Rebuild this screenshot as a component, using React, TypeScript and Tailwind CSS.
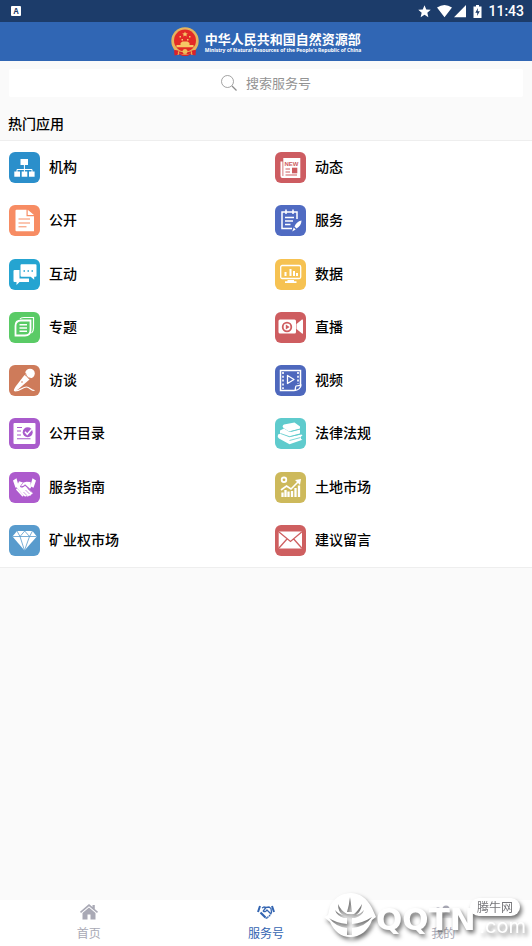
import type { ReactNode } from "react";
import { MdStar } from "react-icons/md";

type Service = { name: string; tile: string; art: ReactNode };

const services: Service[] = [
  {
    name: "机构",
    tile: "bg-[#2b8fcb]",
    art: (
      <>
        <path fill="#fff" d="M11.5 7h7.5v6h-7.5zM5.3 19.5H11v5.2H5.3zM12.7 19.5h5.6v5.2h-5.6zM20 19.5h5.6v5.2H20z" />
        <path stroke="#fff" d="M15.4 13v7M8 20v-2.5h15V20" />
      </>
    ),
  },
  {
    name: "动态",
    tile: "bg-[#cd5c61]",
    art: (
      <>
        <path fill="#fff" d="M8.3 6h17v20H7.5a2 2 0 0 1-2-2V9.5h2V24h.8z" />
        <text x="9.5" y="14" fontSize="6" fontWeight="700" fill="#cd5c61" fontFamily="Liberation Sans, sans-serif">NEW</text>
        <path stroke="#cd5c61" d="M10.5 17h4.5M10.5 20h4.5M10.5 23h11.5" />
        <path fill="#cd5c61" d="M17 15.7h5.3v5.6H17z" />
      </>
    ),
  },
  {
    name: "公开",
    tile: "bg-[#f78c63]",
    art: (
      <>
        <path fill="#fff" d="M7.5 4.7h10v6.5H25v15H7.5a1 1 0 0 1-1-1V5.7a1 1 0 0 1 1-1zM18.7 4.7l6.3 5.3h-6.3z" />
        <path stroke="#f78c63" d="M9.5 14h11.5M9.5 18h11.5M9.5 21.8h8" />
      </>
    ),
  },
  {
    name: "服务",
    tile: "bg-[#506bc2]",
    art: (
      <>
        <path stroke="#fff" strokeWidth="1.5" d="M22 14V7H7v16.5h10M11 4.5V9M18 4.5V9M10 12.5h9M10 16h8M10 19.5h5.5" />
        <path fill="#fff" d="M26.5 15.5c-3.5.8-6 3-7 6l2 2c3-1.5 5-4.500 5-8zM18.700 22.500l2 2-3.500 2z" />
      </>
    ),
  },
  {
    name: "互动",
    tile: "bg-[#25a4d1]",
    art: (
      <>
        <path fill="#fff" d="M5.5 11h5v8.5H20v3.5h-9.5L7.5 26v-3h-2a1 1 0 0 1-1-1V12a1 1 0 0 1 1-1z" />
        <path fill="#fff" d="M12.5 5.3h14a1 1 0 0 1 1 1v10.5a1 1 0 0 1-1 1h-1.3v3l-3.5-3h-9.2a1 1 0 0 1-1-1V6.3a1 1 0 0 1 1-1z" />
        <path fill="#25a4d1" d="M14.5 11.2H16v1.5h-1.5zM18.5 11.2H20v1.5h-1.500zM22.500 11.200H24v1.500h-1.500z" />
      </>
    ),
  },
  {
    name: "数据",
    tile: "bg-[#f6c252]",
    art: (
      <>
        <rect x="5.7" y="6.5" width="20" height="13" rx="1.5" stroke="#fff" strokeWidth="1.3" />
        <path stroke="#fff" strokeWidth="2" d="M10.5 17v-4M15.5 17v-7M19 17v-5M22 17v-3" />
        <path fill="#fff" d="M12.5 21h6.5v1.2h2.5V24H10v-1.8h2.5z" />
      </>
    ),
  },
  {
    name: "专题",
    tile: "bg-[#5acb66]",
    art: (
      <>
        <path stroke="#fff" strokeWidth="1.8" d="M12 8.500h9.500V18c0 3.500-2 5.500-5.500 5.500H6.500V14c0-3.500 2-5.500 5.500-5.500z" />
        <path stroke="#fff" strokeWidth="1.2" d="M11 7c1-1.500 2-1.500 4-1.500h9.500V16c0 3-.5 4-2 5" />
        <path stroke="#fff" strokeWidth="1.500" d="M10.500 12.700h7.500M10.500 16h7.500M10.500 19.300h7.500" />
      </>
    ),
  },
  {
    name: "直播",
    tile: "bg-[#ce5d60]",
    art: (
      <>
        <rect x="3.5" y="7.5" width="17.5" height="14" rx="1.5" fill="#fff" />
        <path fill="#fff" d="m21.500 12 5.500-4.500q1-.5 1 1v12.500q0 1-1 .5L21.500 17z" />
        <circle cx="12" cy="15" r="4.3" stroke="#ce5d60" strokeWidth="1.8" />
        <path fill="#ce5d60" d="m10.800 12.600 3.800 2.400-3.800 2.400z" />
      </>
    ),
  },
  {
    name: "访谈",
    tile: "bg-[#ce7b5a]",
    art: (
      <>
        <circle cx="21" cy="8.5" r="4.8" fill="#fff" />
        <path fill="#fff" d="m15.500 10 5 4.500-11 9.500c-2.500 2-4 2.500-4.500 2s.2-2.500 2-5z" />
        <path stroke="#ce7b5a" strokeWidth=".9" d="M16.500 8c.5 3 2 5 5.500 5.500" />
        <path stroke="#fff" strokeWidth="1.2" d="M6 26c6 0 7-4 11.500-4 3.500 0 4 3.500 8 3.500" />
        <circle cx="13" cy="17" r=".8" fill="#ce7b5a" />
      </>
    ),
  },
  {
    name: "视频",
    tile: "bg-[#4e68bd]",
    art: (
      <>
        <path stroke="#fff" strokeWidth="1.5" d="M19 25.500H5.500v-20h20V20" />
        <path stroke="#fff" strokeWidth="1.6" strokeDasharray="2 1.8" d="M8 7v17M23 7v12" />
        <path stroke="#fff" strokeWidth="1.3" strokeLinejoin="round" d="m12.500 10.500 6.500 4-6.500 4zM19.500 25.500c1.500-1 .5-3 1.500-4.500 2-.8 4 0 5-1 0 3-3 5.500-6.500 5.500z" />
      </>
    ),
  },
  {
    name: "公开目录",
    tile: "bg-[#a95bcc]",
    art: (
      <>
        <rect x="4.5" y="5" width="22" height="21" rx="1" fill="#fff" />
        <path stroke="#a95bcc" strokeWidth="1.100" d="M8 9.500h5M8 13h4M8 17h4M8 20.700h13.500" />
        <circle cx="18.7" cy="14.2" r="5" fill="#a95bcc" />
        <path stroke="#fff" strokeWidth="1.5" d="m16 13.800 2.200 2.500 4.500-5" />
      </>
    ),
  },
  {
    name: "法律法规",
    tile: "bg-[#5fcbcd]",
    art: (
      <>
        <path fill="#fff" d="M9 6.500 19.500 4.500 25 8.500v2.300L14 13.500 8.500 10q-2-2 .5-3.500z" />
        <path fill="#fff" d="M5 12.500 9 10.500l5.500 3.500 10.500-2.500v4L14.500 18.500 5 15.500z" />
        <path fill="#fff" d="m3 16.500 3-1 8.500 3.500L26.500 16.500l1 1-1.500 1v2.500l1.500.7-13 4.500L4 20.500Q2 19 3 16.500z" />
        <path stroke="#5fcbcd" strokeWidth=".8" d="M16 13.500 25 11M5.500 15.500l9 3.200 10-2.500M14.500 22.500l11-3" />
      </>
    ),
  },
  {
    name: "服务指南",
    tile: "bg-[#ad5bcd]",
    art: (
      <>
        <path fill="#fff" d="m4 8.500 3.500-2.300 2.200 8-3.200 1.600zM27 8.500l-3.500-2.300-2.200 8 3.200 1.600z" />
        <path fill="#fff" d="m10 9.300 4 1.200-3 3.700c.5 2 3.500 1.500 5-.5l7.500 7c.5 1.500-1 2-1.500 1.500 0 1.700-1.500 1.800-2 1.200-.5 1.300-2 1.300-2.500.6-1 1-2 .5-3-.5l-7-8z" />
        <path fill="#fff" d="m14.500 10.500 3-.8 4 .3.500 5.500-1 1.200-5-4.500c-1.500 1.800-3 2.300-4 1.800z" />
        <path stroke="#fff" strokeWidth="1.8" strokeLinecap="round" d="m8 17.500 5.500 6" />
        <path stroke="#ad5bcd" strokeWidth=".6" d="m16.500 18 4 4M14.500 20l3.500 3.700M18.500 16.500l4 3.800" />
      </>
    ),
  },
  {
    name: "土地市场",
    tile: "bg-[#cdb95b]",
    art: (
      <>
        <circle cx="9" cy="7.8" r="2.3" stroke="#fff" strokeWidth="1.8" />
        <path stroke="#fff" strokeWidth="1.6" d="m6 18 5.500-4 4.500 3 8-8" />
        <path fill="#fff" d="m20 8 6-1-1 6z" />
        <path stroke="#fff" strokeWidth="2.3" d="M7.500 25v-4.500M10.500 25v-7M13.500 25v-5.500M17 25v-6M20.500 25v-9M24 25V13.500" />
      </>
    ),
  },
  {
    name: "矿业权市场",
    tile: "bg-[#589bcd]",
    art: (
      <>
        <path fill="#fff" d="M8 6h15.500l4.300 5.500-12.300 14-12-14z" />
        <path stroke="#589bcd" strokeWidth=".8" d="M3.500 11.500h24M8 6l3 5.500L15.700 6l4.800 5.500 3-5.500M11 11.500l4.500 14 5-14" />
      </>
    ),
  },
  {
    name: "建议留言",
    tile: "bg-[#ce5f60]",
    art: (
      <>
        <rect x="3.7" y="6.5" width="23.3" height="17" rx="1" fill="#fff" />
        <path stroke="#ce5f60" strokeWidth="1.3" d="m4 7 11.500 9.500L26.700 7M4 23l8-9M26.700 23l-8-9" />
      </>
    ),
  },
];

function Emblem() {
  return (
    <svg viewBox="0 0 28 30" className="h-[30px] w-7" aria-hidden="true">
      <path fill="#d9222a" d="M3 22h22l-.5 6.500-5-1-3 1.500h-5l-3-1.500-5 1z" />
      <circle cx="14" cy="14" r="13.7" fill="#e5b45d" />
      <circle cx="14" cy="13.5" r="11" fill="#e32a26" />
      <path fill="#f6c765" d="m14 4.500.8 1.800 2 .1-1.500 1.300.5 1.900-1.800-1-1.700 1 .4-1.900-1.500-1.300 2-.1zM8.500 9h1.500v1.500H8.500zM18 9h1.500v1.500H18zM10.500 12H12v1.500h-1.500zM16 12h1.500v1.500H16zM9.500 16l2-1.500h5l2 1.500v2h4v2.200h-17V18h4z" />
      <path stroke="#d9222a" strokeWidth="2" fill="none" d="M4 24c3 0 4 2 7 2h6c3 0 4-2 7-2" />
      <circle cx="14" cy="24.5" r="2.5" fill="#f0bc58" />
      <path stroke="#f0bc58" d="m8 24-1 4M20 24l1 4" />
    </svg>
  );
}

function StatusBar() {
  return (
    <div className="flex h-[22px] items-center justify-between bg-[#1c3c6a] pr-2 pl-[11px] text-white">
      <span className="flex h-[10px] w-[10px] items-center justify-center rounded-[1px] bg-white text-[8px] font-bold text-[#1c3c6a]">A</span>
      <div className="flex items-center">
        <MdStar className="size-[15px]" />
        <svg viewBox="0 0 32 14" className="ml-1 h-[14px] w-8" fill="currentColor" aria-hidden="true">
          <path d="M1 3.500Q8.500-1.500 16 3.500L8.500 13.300zM30 1v12.300H18z" />
        </svg>
        <svg viewBox="0 0 9 13" className="ml-[5px] h-[13px] w-[9px]" aria-hidden="true">
          <path fill="#fff" d="M3 0h3v1.500h2.500V13H.5V1.500H3z" />
          <path fill="#1c3c6a" d="M5 3 2.300 7.700h2L4 11l2.800-4.800H4.700z" />
        </svg>
        <span className="ml-[6px] font-[Roboto,sans-serif] text-[14px] leading-[22px] font-medium">11:43</span>
      </div>
    </div>
  );
}

function HomeIcon() {
  return (
    <svg viewBox="0 0 18 16" className="h-4 w-[18px]" aria-hidden="true">
      <path fill="currentColor" d="M9 3.500 15.500 9v6.500h-5v-5h-3v5h-5V9zM9 0l3.500 3V1h2.300v4L18 7.700l-1 1.200-8-6.700-8 6.700-1-1.200z" />
    </svg>
  );
}

function HandshakeIcon() {
  return (
    <svg viewBox="0 0 18 16" className="h-4 w-[18px]" aria-hidden="true" fill="none" stroke="currentColor">
      <path strokeWidth="2" d="M3 2 1 8M15 2l2 6" />
      <path strokeWidth="1.3" d="m5 4 2-1 2 .5 3-.5 2 1.500.5 4-1 2M8.500 4 6.300 7c1 1.200 2.700.8 3.700-1l3.500 3.500" />
      <path strokeWidth="2.2" d="m3.500 8.500 5 5" />
      <path strokeWidth="1.3" d="M8.500 14h2M10.500 12.500l1 1M12 11l1.200 1.200" />
    </svg>
  );
}

function PeopleIcon() {
  return (
    <svg viewBox="0 0 18 16" className="h-4 w-[18px]" aria-hidden="true" fill="currentColor">
      <circle cx="4" cy="5" r="2" opacity=".6" />
      <circle cx="12" cy="5" r="3.5" />
      <path d="M6 14q0-5 6-5t6 5z" opacity=".2" />
    </svg>
  );
}

function Watermark() {
  return (
    <div className="pointer-events-none absolute right-[6px] bottom-1 h-[50px] w-[202px] text-white drop-shadow-[2px_3px_2px_rgba(0,0,0,0.55)]">
      <svg viewBox="0 0 54 48" className="absolute top-0 left-0 h-12 w-[54px]" aria-hidden="true">
        <path
          fill="#fff"
          fillRule="evenodd"
          d="M6 14C12 4 19 1 27 1s16 5 21 15l4 9-4 3c-4 11-12 17-22 17-9 0-16-6-20-15l-6-5 4-2zM26 5q-1 9-3 15h5q-1-8-2-15zM14 12q0 8 5 11-5-1-8-5 2 6 9 8h3v6q-11-1-18-6 7 9 18 10v7h5v-7q13-1 20-11-9 6-20 7v-6h3q7-2 9-8-3 4-8 5 5-3 6-11-4 7-8 10h-7q-6-3-9-10z"
        />
      </svg>
      <span className="absolute top-[9px] left-[52px] font-['DejaVu_Sans',sans-serif] text-[31px] leading-9 font-bold">QQTN</span>
      <span className="absolute top-[22px] right-0 font-[Inter,sans-serif] text-[20px] leading-6">.com</span>
      <span className="absolute top-[6px] right-[6px] rounded-full bg-white px-[7px] text-[12px] leading-[18px] text-[#77777b]">腾牛网</span>
    </div>
  );
}

const tabs = [
  { name: "首页", Icon: HomeIcon, style: "text-[#a9a9b5]" },
  { name: "服务号", Icon: HandshakeIcon, style: "text-[#3465b1]" },
  { name: "我的", Icon: PeopleIcon, style: "text-[#a9a9b5]" },
];

export default function App() {
  return (
    <div className="relative flex min-h-screen flex-col overflow-hidden bg-[#fafafa] font-['Noto_Sans_CJK_SC',sans-serif] text-black">
      <StatusBar />
      <header className="flex h-[39px] items-center justify-center gap-[6px] bg-[#3066b4] text-white">
        <Emblem />
        <div className="flex flex-col">
          <h1 className="text-[13px] leading-4 font-bold">中华人民共和国自然资源部</h1>
          <p className="font-['Noto_Sans',sans-serif] text-[5px] leading-[6px] font-bold whitespace-nowrap">
            Ministry of Natural Resources of the People's Republic of China
          </p>
        </div>
      </header>
      <main className="flex-1">
        <button type="button" className="mx-[9px] mt-2 flex h-7 w-[calc(100%-18px)] items-center justify-center gap-[9px] rounded-xs bg-white text-[13px] text-[#939393]">
          <svg viewBox="0 0 16 16" className="size-4" fill="none" stroke="#8c8c8c" aria-hidden="true">
            <circle cx="6.5" cy="6.5" r="6" strokeWidth=".8" />
            <path strokeWidth="1.3" d="m11 11 4.500 4.500" />
          </svg>
          <span className="leading-7">搜索服务号</span>
        </button>
        <h2 className="mt-[10px] px-2 text-[14px] leading-[33px] font-medium">热门应用</h2>
        <ul className="grid h-[428px] grid-cols-2 grid-rows-8 border-y border-[#eeeeee] bg-white">
          {services.map(({ name, tile, art }) => (
            <li key={name} className="flex">
              <button type="button" className="flex flex-1 items-center gap-[9px] pl-[9px] text-left">
                <span className={`${tile} size-[31px] rounded-[6px]`}>
                  <svg viewBox="0 0 31 31" className="size-[31px]" fill="none" aria-hidden="true">
                    {art}
                  </svg>
                </span>
                <span className="pb-[3px] text-[14px] leading-5 font-medium">{name}</span>
              </button>
            </li>
          ))}
        </ul>
      </main>
      <nav className="grid h-[46px] grid-cols-3 bg-white">
        {tabs.map(({ name, Icon, style }) => (
          <button key={name} type="button" className={`${style} flex flex-col items-center gap-1 pt-1`}>
            <Icon />
            <span className="text-[12px] leading-[18px]">{name}</span>
          </button>
        ))}
      </nav>
      <Watermark />
    </div>
  );
}
